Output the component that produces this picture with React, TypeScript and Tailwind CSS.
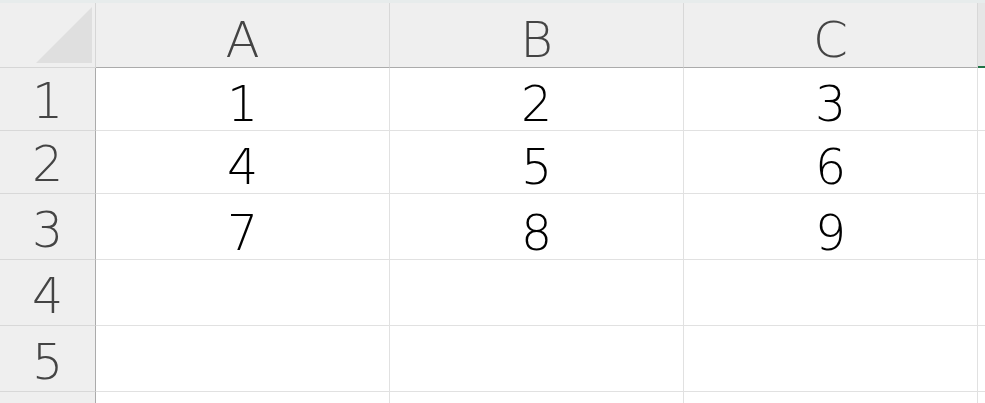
import React from "react";

const cols = ["A", "B", "C"];
const rows: { n: number; h: string; vals: string[] }[] = [
  { n: 1, h: "h-[63px]", vals: ["1", "2", "3"] },
  { n: 2, h: "h-[63px]", vals: ["4", "5", "6"] },
  { n: 3, h: "h-[66px]", vals: ["7", "8", "9"] },
  { n: 4, h: "h-[66px]", vals: ["", "", ""] },
  { n: 5, h: "h-[66px]", vals: ["", "", ""] },
];

export default function App() {
  return (
    <div
      className="w-[985px] h-[403px] overflow-hidden bg-white font-extralight"
      style={{ fontFamily: '"DejaVu Sans", sans-serif' }}
    >
      {/* header row */}
      <div className="flex h-[68px] bg-[#efefef] border-t-[3px] border-[#e7ecec]">
        <div className="relative w-[96px] shrink-0 border-r border-b border-[#d6d6d6]">
          <svg className="absolute left-0 top-0" width="95" height="64" viewBox="0 0 95 64">
            <polygon points="36,60 92,4 92,60" fill="#dfdfdf" />
          </svg>
        </div>
        {cols.map((c) => (
          <div
            key={c}
            className="w-[294px] shrink-0 border-r border-[#d8d8d8] border-b border-b-[#ababab] flex items-end justify-center pb-[2px] text-[50px] leading-none text-[#444444]"
          >
            {c}
          </div>
        ))}
        <div className="relative flex-1 bg-[#e6e6e6] border-b-2 border-[#217346]" />
      </div>
      {rows.map((r) => (
        <div key={r.n} className={`flex ${r.h}`}>
          <div className="w-[96px] shrink-0 bg-[#efefef] border-r border-[#ababab] border-b border-b-[#d8d8d8] flex items-end justify-center pb-[4px] text-[49px] leading-none text-[#444444]">
            {r.n}
          </div>
          {r.vals.map((v, i) => (
            <div
              key={i}
              className="w-[294px] shrink-0 border-r border-b border-[#e1e1e1] flex items-end justify-center pb-[1px] text-[49px] leading-none text-black"
            >
              {v}
            </div>
          ))}
          <div className="flex-1 border-b border-[#e1e1e1]" />
        </div>
      ))}
      <div className="flex h-[20px]">
        <div className="w-[96px] shrink-0 bg-[#efefef] border-r border-[#ababab]" />
        {cols.map((c) => (
          <div key={c} className="w-[294px] shrink-0 border-r border-[#e1e1e1]" />
        ))}
      </div>
    </div>
  );
}
